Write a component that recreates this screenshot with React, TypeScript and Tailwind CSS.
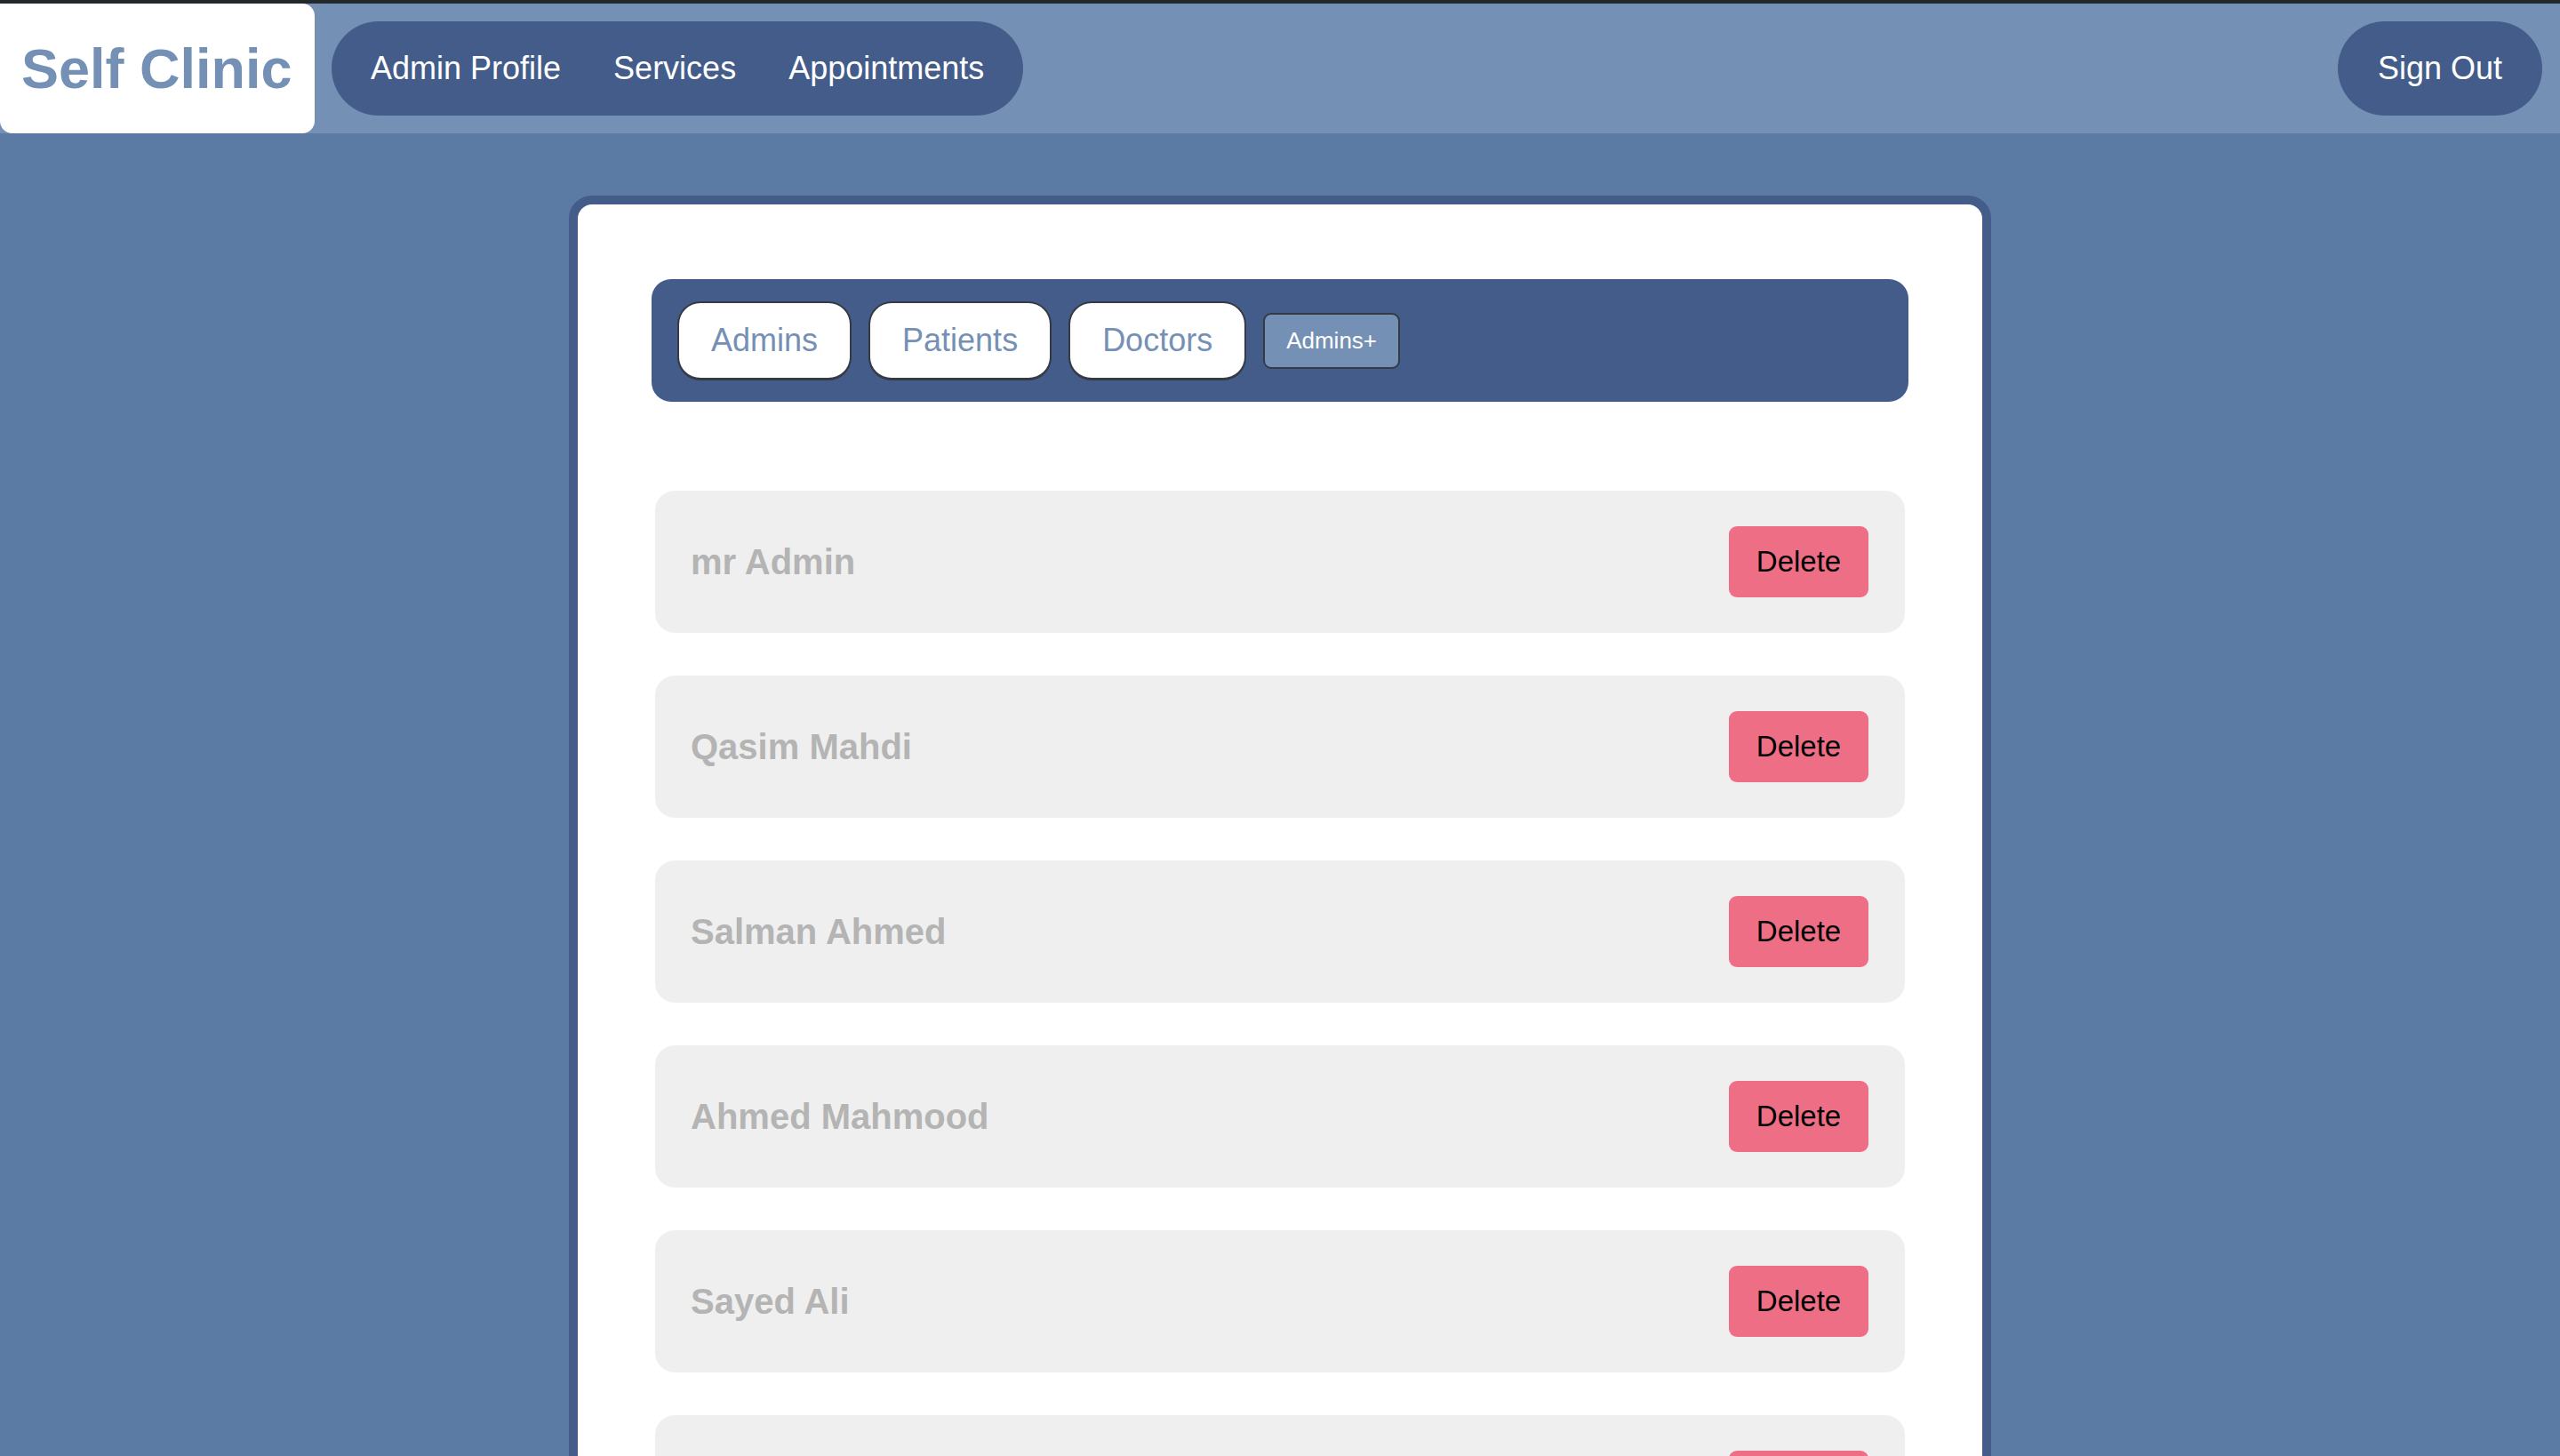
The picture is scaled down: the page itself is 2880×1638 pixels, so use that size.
import { useState } from "react";

const admins = [
  "mr Admin",
  "Qasim Mahdi",
  "Salman Ahmed",
  "Ahmed Mahmood",
  "Sayed Ali",
  "Hassan Jaffar",
];

const tabs = ["Admins", "Patients", "Doctors"];

export default function App() {
  const [list, setList] = useState(admins);

  return (
    <div
      className="h-screen overflow-hidden bg-[#5b7ba5]"
      style={{ fontFamily: '"Liberation Sans", Arial, sans-serif' }}
    >
      {/* Top bar */}
      <div className="h-1 bg-[#23282d]"></div>
      <header className="flex h-[146px] items-center justify-between bg-[#7590b5] pr-5">
        <div className="flex items-center gap-[19px] self-stretch">
          <div className="flex h-full w-[354px] items-center rounded-r-[14px] rounded-bl-[14px] bg-white pl-[24px]">
            <span className="text-[63px] font-bold text-[#7590b5]">Self Clinic</span>
          </div>
          <nav className="flex h-[106px] items-center gap-[59px] rounded-full bg-[#435c8a] px-11 text-[36px] text-white">
            <a href="#">Admin Profile</a>
            <a href="#">Services</a>
            <a href="#">Appointments</a>
          </nav>
        </div>
        <button className="h-[106px] rounded-full bg-[#435c8a] px-[45px] text-[36px] text-white">
          Sign Out
        </button>
      </header>

      {/* Main card */}
      <main className="flex justify-center pt-[70px]">
        <div className="w-[1600px] rounded-[26px] border-[10px] border-[#435c8a] bg-white px-[83px] pt-[84px]">
          <div className="flex h-[138px] items-center gap-[19px] rounded-[22px] bg-[#435c8a] px-[29px]">
            {tabs.map((t) => (
              <button
                key={t}
                className="h-[89px] rounded-[26px] border-2 border-b-[3px] border-[#353a45] bg-white px-9 text-[36px] text-[#7590b5]"
              >
                {t}
              </button>
            ))}
            <button className="h-[63px] rounded-[9px] border-2 border-[#353a45] bg-[#7590b5] px-6 text-[26px] text-white">
              Admins+
            </button>
          </div>

          <div className="mx-1 mt-[100px] flex flex-col gap-12">
            {list.map((name) => (
              <div
                key={name}
                className="flex h-[160px] items-center justify-between rounded-[22px] bg-[#efefef] pl-10 pr-[41px]"
              >
                <span className="text-[40px] font-bold text-[#b4b4b4]">{name}</span>
                <button
                  onClick={() => setList(list.filter((n) => n !== name))}
                  className="h-20 w-[157px] rounded-[9px] bg-[#ee6f85] text-[33px] text-black"
                >
                  Delete
                </button>
              </div>
            ))}
          </div>
        </div>
      </main>
    </div>
  );
}
